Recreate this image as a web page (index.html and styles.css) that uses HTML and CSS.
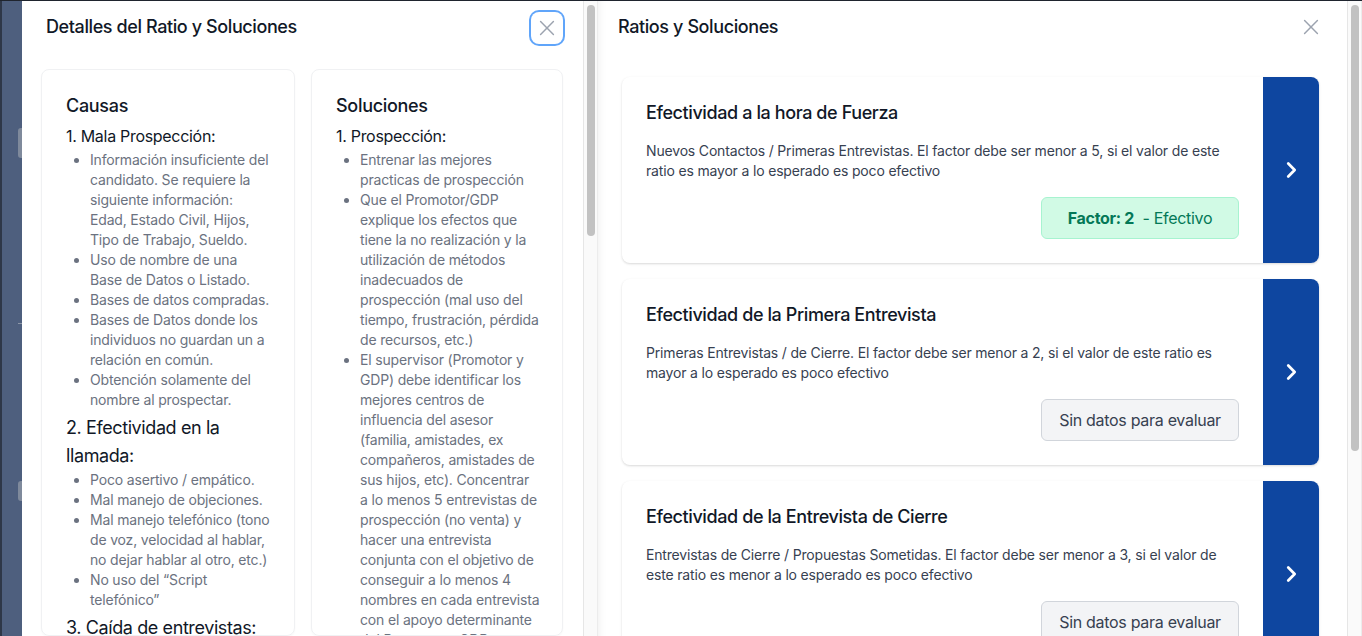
FILE: index.html
```html
<!DOCTYPE html>
<html lang="es">
<head>
<meta charset="utf-8">
<title>Ratios y Soluciones</title>
<link rel="stylesheet" href="styles.css">
</head>
<body>
<div class="screen">
  <div class="strip">
    <span class="strip-tab tab-a"></span>
    <span class="strip-line"></span>
    <span class="strip-tab tab-b"></span>
  </div>

  <section class="panel panel-left">
    <header class="panel-head head-left">
      <h2 class="panel-title">Detalles del Ratio y Soluciones</h2>
      <button class="close-btn focused" aria-label="Cerrar">
        <svg viewBox="0 0 24 24" width="22" height="22"><path d="M5 5 L19 19 M19 5 L5 19" fill="none" stroke="currentColor" stroke-width="1.6" stroke-linecap="round"/></svg>
      </button>
    </header>
    <div class="cols">
      <article class="info-card">
        <h3 class="info-title">Causas</h3>
        <p class="group">1. Mala Prospección:</p>
        <ul class="items">
          <li>Información insuficiente del candidato. Se requiere la siguiente información: Edad, Estado Civil, Hijos, Tipo de Trabajo, Sueldo.</li>
          <li>Uso de nombre de una Base de Datos o Listado.</li>
          <li>Bases de datos compradas.</li>
          <li>Bases de Datos donde los individuos no guardan un a relación en común.</li>
          <li>Obtención solamente del nombre al prospectar.</li>
        </ul>
        <p class="group group-lg">2. Efectividad en la llamada:</p>
        <ul class="items">
          <li>Poco asertivo / empático.</li>
          <li>Mal manejo de objeciones.</li>
          <li>Mal manejo telefónico (tono de voz, velocidad al hablar, no dejar hablar al otro, etc.)</li>
          <li>No uso del “Script telefónico”</li>
        </ul>
        <p class="group group-lg">3. Caída de entrevistas:</p>
        <ul class="items">
          <li>Falta de confirmación de la cita con el prospecto.</li>
        </ul>
      </article>
      <article class="info-card">
        <h3 class="info-title">Soluciones</h3>
        <p class="group">1. Prospección:</p>
        <ul class="items">
          <li>Entrenar las mejores practicas de prospección</li>
          <li>Que el Promotor/GDP explique los efectos que tiene la no realización y la utilización de métodos inadecuados de prospección (mal uso del tiempo, frustración, pérdida de recursos, etc.)</li>
          <li>El supervisor (Promotor y GDP) debe identificar los mejores centros de influencia del asesor (familia, amistades, ex compañeros, amistades de sus hijos, etc). Concentrar a lo menos 5 entrevistas de prospección (no venta) y hacer una entrevista conjunta con el objetivo de conseguir a lo menos 4 nombres en cada entrevista con el apoyo determinante del Promotor o GDP (acompañamiento).</li>
        </ul>
      </article>
    </div>
  </section>

  <div class="scrollbar sb-left"><span class="thumb thumb-left"></span></div>

  <section class="panel panel-right">
    <header class="panel-head head-right">
      <h2 class="panel-title">Ratios y Soluciones</h2>
      <button class="close-btn plain" aria-label="Cerrar">
        <svg viewBox="0 0 24 24" width="22" height="22"><path d="M5 5 L19 19 M19 5 L5 19" fill="none" stroke="currentColor" stroke-width="1.6" stroke-linecap="round"/></svg>
      </button>
    </header>
    <div class="ratio-list">
      <article class="ratio-card">
        <div class="ratio-body">
          <h3 class="ratio-title">Efectividad a la hora de Fuerza</h3>
          <p class="ratio-desc">Nuevos Contactos / Primeras Entrevistas. El factor debe ser menor a 5, si el valor de este ratio es mayor a lo esperado es poco efectivo</p>
          <div class="ratio-foot"><span class="badge badge-ok"><b>Factor: 2</b>&nbsp; - Efectivo</span></div>
        </div>
        <div class="ratio-go"><svg viewBox="0 0 24 24" width="22" height="22"><path d="M9 5 L16 12 L9 19" fill="none" stroke="#fff" stroke-width="3" stroke-linecap="round" stroke-linejoin="round"/></svg></div>
      </article>
      <article class="ratio-card">
        <div class="ratio-body">
          <h3 class="ratio-title">Efectividad de la Primera Entrevista</h3>
          <p class="ratio-desc">Primeras Entrevistas / de Cierre. El factor debe ser menor a 2, si el valor de este ratio es mayor a lo esperado es poco efectivo</p>
          <div class="ratio-foot"><span class="badge badge-none">Sin datos para evaluar</span></div>
        </div>
        <div class="ratio-go"><svg viewBox="0 0 24 24" width="22" height="22"><path d="M9 5 L16 12 L9 19" fill="none" stroke="#fff" stroke-width="3" stroke-linecap="round" stroke-linejoin="round"/></svg></div>
      </article>
      <article class="ratio-card">
        <div class="ratio-body">
          <h3 class="ratio-title">Efectividad de la Entrevista de Cierre</h3>
          <p class="ratio-desc">Entrevistas de Cierre / Propuestas Sometidas. El factor debe ser menor a 3, si el valor de este ratio es menor a lo esperado es poco efectivo</p>
          <div class="ratio-foot"><span class="badge badge-none">Sin datos para evaluar</span></div>
        </div>
        <div class="ratio-go"><svg viewBox="0 0 24 24" width="22" height="22"><path d="M9 5 L16 12 L9 19" fill="none" stroke="#fff" stroke-width="3" stroke-linecap="round" stroke-linejoin="round"/></svg></div>
      </article>
    </div>
  </section>

  <div class="scrollbar sb-right"><span class="thumb thumb-right"></span></div>
</div>
</body>
</html>
```

FILE: styles.css
```css
* { box-sizing: border-box; }

html, body {
  margin: 0;
  padding: 0;
  width: 1362px;
  height: 636px;
  overflow: hidden;
  background: #1f242e;
  font-family: Inter, "Noto Sans", sans-serif;
  color: #111827;
}

.screen {
  display: flex;
  height: 636px;
  border-top: 1px solid #1f242e;
  overflow: hidden;
}

/* backdrop strip on the left */
.strip {
  width: 22px;
  flex: none;
  background: #4e5f7e;
  border-left: 2px solid #2e3748;
  display: flex;
  flex-direction: column;
  align-items: flex-end;
}
.strip-tab {
  width: 4px;
  background: #7f8a9c;
  border-radius: 3px 0 0 3px;
}
.tab-a { height: 30px; margin-top: 127px; }
.strip-line { width: 4px; height: 1px; background: #8d97a8; margin-top: 165px; }
.tab-b { height: 20px; margin-top: 157px; }

/* panels */
.panel {
  background: #fff;
  display: flex;
  flex-direction: column;
  overflow: hidden;
  height: 635px;
}
.panel-left { width: 561px; flex: none; }
.panel-right {
  flex: 1;
  box-shadow: inset 10px 0 10px -10px rgba(0, 0, 0, 0.08);
}

.panel-head {
  height: 52px;
  flex: none;
  display: flex;
  align-items: center;
  justify-content: space-between;
}
.head-left { padding: 0 20px 0 24px; }
.head-right { padding: 0 23px 0 20px; }

.panel-title {
  margin: 0;
  font-size: 18px;
  line-height: 28px;
  font-weight: 500;
  color: #111827;
  letter-spacing: -0.4px;
}

.close-btn {
  width: 32px;
  height: 32px;
  display: flex;
  align-items: center;
  justify-content: center;
  padding: 0;
  background: #fff;
  color: #9ca3af;
  border: 0;
  border-radius: 8px;
}
.close-btn.focused {
  box-shadow: 0 0 0 2px #60a5fa;
  margin-top: 2px;
}
.close-btn.plain { width: 26px; height: 26px; }

/* left columns */
.cols {
  display: grid;
  grid-template-columns: 254px 1fr;
  gap: 16px;
  padding: 16px 20px 0 19px;
  flex: 1;
  min-height: 0;
}
.info-card {
  border: 1px solid #f0f1f3;
  border-radius: 8px;
  padding: 22px 22px 0 24px;
  box-shadow: 0 1px 2px rgba(0, 0, 0, 0.03);
  overflow: hidden;
}
.info-title {
  margin: 0;
  font-size: 18px;
  line-height: 28px;
  font-weight: 500;
  color: #111827;
  letter-spacing: -0.3px;
}
.group {
  margin: 4px 0 0;
  font-size: 16px;
  line-height: 28px;
  color: #111827;
  letter-spacing: -0.3px;
}
.group-lg {
  font-size: 18px;
  letter-spacing: -0.4px;
}
.info-title + .group { margin-top: 2px; }
.items {
  margin: 0;
  padding-left: 24px;
  font-size: 14px;
  line-height: 20px;
  color: #6b7280;
  letter-spacing: -0.17px;
}

/* right list */
.ratio-list {
  display: flex;
  flex-direction: column;
  gap: 16px;
  padding: 24px 28px 0 24px;
}
.ratio-card {
  display: flex;
  height: 186px;
  flex: none;
  border-radius: 8px;
  background: #fff;
  box-shadow: 0 1px 3px rgba(0, 0, 0, 0.1), 0 1px 2px rgba(0, 0, 0, 0.06);
  overflow: hidden;
}
.ratio-body {
  flex: 1;
  padding: 24px;
  display: flex;
  flex-direction: column;
}
.ratio-title {
  margin: 0;
  font-size: 18px;
  line-height: 24px;
  font-weight: 500;
  color: #111827;
  letter-spacing: -0.4px;
}
.ratio-desc {
  margin: 16px 0 0;
  font-size: 14px;
  line-height: 20px;
  color: #374151;
  letter-spacing: -0.17px;
}
.ratio-foot {
  margin-top: 16px;
  display: flex;
  justify-content: flex-end;
}
.badge {
  width: 198px;
  height: 42px;
  display: flex;
  align-items: center;
  justify-content: center;
  border-radius: 6px;
  font-size: 16px;
  border: 1px solid;
  letter-spacing: -0.3px;
}
.badge b { font-weight: 700; }
.badge-ok {
  background: #d1fae5;
  border-color: #a7f3d0;
  color: #047857;
}
.badge-none {
  background: #f3f4f6;
  border-color: #d1d5db;
  color: #374151;
}
.ratio-go {
  width: 56px;
  flex: none;
  background: #0e46a0;
  display: flex;
  align-items: center;
  justify-content: center;
}

/* scrollbars */
.scrollbar {
  width: 15px;
  flex: none;
  background: #fafafa;
  border-left: 1px solid #e6e6e6;
  border-right: 1px solid #ececec;
  display: flex;
  justify-content: center;
  padding-top: 4px;
  height: 635px;
}
.thumb {
  width: 8px;
  background: #c2c2c2;
  border-radius: 4px;
}
.thumb-left { height: 231px; }
.thumb-right { height: 446px; }
```
